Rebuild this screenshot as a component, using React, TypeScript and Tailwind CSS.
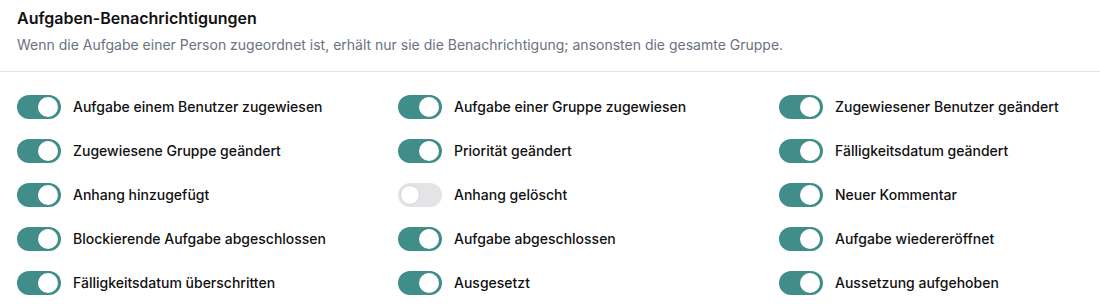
import React from "react";

const items: [string, boolean][] = [
  ["Aufgabe einem Benutzer zugewiesen", true],
  ["Aufgabe einer Gruppe zugewiesen", true],
  ["Zugewiesener Benutzer geändert", true],
  ["Zugewiesene Gruppe geändert", true],
  ["Priorität geändert", true],
  ["Fälligkeitsdatum geändert", true],
  ["Anhang hinzugefügt", true],
  ["Anhang gelöscht", false],
  ["Neuer Kommentar", true],
  ["Blockierende Aufgabe abgeschlossen", true],
  ["Aufgabe abgeschlossen", true],
  ["Aufgabe wiedereröffnet", true],
  ["Fälligkeitsdatum überschritten", true],
  ["Ausgesetzt", true],
  ["Aussetzung aufgehoben", true],
];

function Toggle({ on }: { on: boolean }) {
  return on ? (
    <div className="flex h-[24px] w-[44px] shrink-0 items-center justify-end rounded-full bg-[#418d8a] px-[3px]">
      <div className="h-[20px] w-[20px] rounded-full bg-white" />
    </div>
  ) : (
    <div className="flex h-[24px] w-[44px] shrink-0 items-center justify-start rounded-full bg-[#e4e4e7] px-[2px]">
      <div className="h-[20px] w-[20px] rounded-full border border-[#d4d4d8] bg-white" />
    </div>
  );
}

export default function App() {
  return (
    <div className="w-[1100px] bg-white font-['Inter',sans-serif]">
      <div className="px-[17px] pt-[6px] pb-[16px]">
        <h2 className="text-[16px] font-semibold leading-[24px] text-[#111111]">
          Aufgaben-Benachrichtigungen
        </h2>
        <p className="mt-[5px] text-[14px] leading-[20px] text-[#6b7280]">
          Wenn die Aufgabe einer Person zugeordnet ist, erhält nur sie die Benachrichtigung; ansonsten die gesamte Gruppe.
        </p>
      </div>
      <div className="border-t border-[#e5e5e5]" />
      <div className="grid grid-cols-[381px_381px_1fr] gap-y-[20px] pl-[17px] pt-[23px] pb-[20px]">
        {items.map(([label, on]) => (
          <div key={label} className="flex h-[24px] items-center gap-[12px]">
            <Toggle on={on} />
            <span className="text-[14px] font-medium leading-[20px] text-[#111111]">{label}</span>
          </div>
        ))}
      </div>
    </div>
  );
}
